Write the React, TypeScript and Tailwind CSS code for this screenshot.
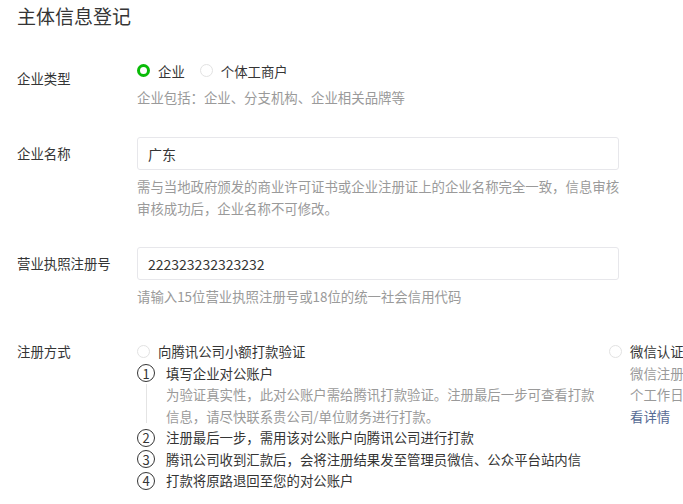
import React, { useState } from "react";

const font = { fontFamily: '"Noto Sans CJK SC", "Noto Sans", sans-serif' };

function Radio({ checked }: { checked?: boolean }) {
  return checked ? (
    <span className="w-[13px] h-[13px] rounded-full border-[3.5px] border-[#09bb07] bg-white shrink-0" />
  ) : (
    <span className="w-[13px] h-[13px] rounded-full border border-[#e2e2e2] bg-white shrink-0" />
  );
}

function Circled({ n }: { n: number }) {
  return (
    <span className="w-[18px] h-[18px] rounded-full border border-[#353535] flex items-center justify-center text-[13px] leading-none text-[#353535] shrink-0">
      {n}
    </span>
  );
}

export default function App() {
  const [kind, setKind] = useState("企业");
  const [name, setName] = useState("广东");
  const [license, setLicense] = useState("222323232323232");

  return (
    <div
      className="w-[683px] h-[504px] overflow-hidden bg-white pl-[17px] text-[13.4px] text-[#353535]"
      style={font}
    >
      <h1 className="text-[19px] leading-[26px] pt-[3px] font-normal text-[#353535]">主体信息登记</h1>

      {/* 企业类型 */}
      <div className="flex mt-[31px]">
        <div className="w-[120px] shrink-0 leading-[22px] pt-[7px]">企业类型</div>
        <div className="flex flex-col">
          <div className="flex items-center h-[22px]">
            {["企业", "个体工商户"].map((k) => (
              <label
                key={k}
                onClick={() => setKind(k)}
                className="flex items-center gap-[8px] mr-[15px] cursor-pointer"
              >
                <Radio checked={kind === k} />
                <span>{k}</span>
              </label>
            ))}
          </div>
          <p className="mt-[4px] leading-[22px] text-[#9a9a9a]">企业包括：企业、分支机构、企业相关品牌等</p>
        </div>
      </div>

      {/* 企业名称 */}
      <div className="flex mt-[29px]">
        <div className="w-[120px] shrink-0 leading-[33px]">企业名称</div>
        <div className="flex flex-col">
          <input
            value={name}
            onChange={(e) => setName(e.target.value)}
            className="w-[482px] h-[33px] border border-[#e7e7eb] rounded-[3px] px-[10px] text-[14px] text-[#353535] outline-none"
            style={font}
          />
          <p className="mt-[5px] w-[486px] leading-[22px] text-[#9a9a9a]">
            需与当地政府颁发的商业许可证书或企业注册证上的企业名称完全一致，信息审核审核成功后，企业名称不可修改。
          </p>
        </div>
      </div>

      {/* 营业执照注册号 */}
      <div className="flex mt-[28px]">
        <div className="w-[120px] shrink-0 leading-[33px]">营业执照注册号</div>
        <div className="flex flex-col">
          <input
            value={license}
            onChange={(e) => setLicense(e.target.value)}
            className="w-[482px] h-[33px] border border-[#e7e7eb] rounded-[3px] px-[10px] text-[14px] text-[#353535] outline-none"
            style={font}
          />
          <p className="mt-[5px] leading-[22px] text-[#9a9a9a]">请输入15位营业执照注册号或18位的统一社会信用代码</p>
        </div>
      </div>

      {/* 注册方式 */}
      <div className="flex mt-[34px] leading-[21.5px]">
        <div className="w-[120px] shrink-0">注册方式</div>
        <div className="flex w-[472px] shrink-0 flex-col">
          <div className="flex items-center h-[21.5px] gap-[8px]">
            <Radio />
            <span>向腾讯公司小额打款验证</span>
          </div>
          <div className="flex gap-[11px]">
            <div className="flex flex-col items-center w-[18px] shrink-0">
              <div className="h-[21.5px] flex items-center">
                <Circled n={1} />
              </div>
              <div className="flex-1 w-px bg-[#e4e4e4] mb-[4px]" />
            </div>
            <div className="flex flex-col">
              <span>填写企业对公账户</span>
              <span className="text-[#9a9a9a] w-[440px]">
                为验证真实性，此对公账户需给腾讯打款验证。注册最后一步可查看打款信息，请尽快联系贵公司/单位财务进行打款。
              </span>
            </div>
          </div>
          {[
            "注册最后一步，需用该对公账户向腾讯公司进行打款",
            "腾讯公司收到汇款后，会将注册结果发至管理员微信、公众平台站内信",
            "打款将原路退回至您的对公账户",
          ].map((t, i) => (
            <div key={i} className="flex gap-[11px] items-center h-[21.5px]">
              <Circled n={i + 2} />
              <span>{t}</span>
            </div>
          ))}
        </div>
        <div className="flex flex-col shrink-0">
          <div className="flex items-center h-[21.5px] gap-[8px]">
            <Radio />
            <span className="whitespace-nowrap">微信认证</span>
          </div>
          <div className="pl-[21px] flex flex-col text-[#9a9a9a] whitespace-nowrap">
            <span>微信注册认证</span>
            <span>个工作日</span>
            <a className="text-[#576b95] cursor-pointer">看详情</a>
          </div>
        </div>
      </div>
    </div>
  );
}
